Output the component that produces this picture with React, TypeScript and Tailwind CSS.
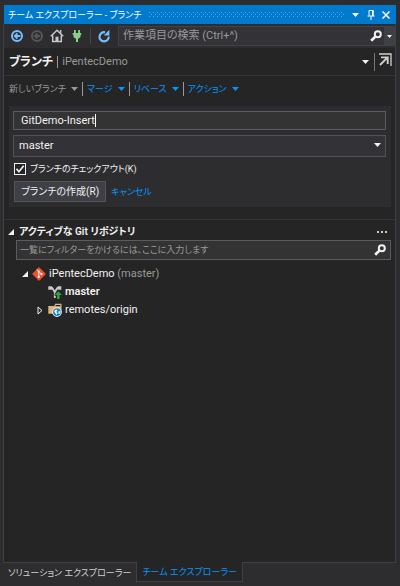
import { useState } from "react";

const CaretDown = ({ className = "" }: { className?: string }) => (
  <svg viewBox="0 0 7 4" className={`h-1 w-[7px] shrink-0 fill-current ${className}`}>
    <path d="M0 0h7L3.5 4z" />
  </svg>
);

const SearchIcon = () => (
  <svg viewBox="0 0 12 12" className="size-3 shrink-0 text-[#f1f1f1]">
    <circle cx="7.8" cy="4.2" r="3" fill="none" stroke="currentColor" strokeWidth="2" />
    <path d="M5.6 6.4L1.2 10.8" stroke="currentColor" strokeWidth="2.7" />
  </svg>
);

const ArrowCircle = ({ className = "" }: { className?: string }) => (
  <svg viewBox="0 0 12 12" className={`size-3 ${className}`}>
    <circle cx="6" cy="6" r="5" fill="none" stroke="currentColor" strokeWidth="2" />
    <path d="M9.2 6H4M6.4 3.4L3.8 6l2.6 2.6" fill="none" stroke="currentColor" strokeWidth="1.8" />
  </svg>
);

const HomeIcon = () => (
  <svg viewBox="0 0 14 14" className="size-3.5 text-[#c8c8c8]">
    <path d="M.8 7.3L7 1.3l6.2 6M2.7 6.5v6h8.6v-6M10.6 1v3.5" fill="none" stroke="currentColor" strokeWidth="1.5" />
    <path d="M5.5 7.7h3v5h-3z" fill="currentColor" />
  </svg>
);

const PlugIcon = () => (
  <svg viewBox="0 0 10 14" className="h-3.5 w-2.5 fill-[#89d185]">
    <path d="M2 1h1.8v3h2.4V1H8v3h1.3v1.8h-.8V8L6.8 9.6H6V13H4V9.6h-.8L1.5 8V5.8H.7V4H2z" />
  </svg>
);

const RefreshIcon = () => (
  <svg viewBox="0 0 14 14" className="size-3.5 text-[#75bfff]">
    <path d="M8 3.3A4.6 4.6 0 1 0 11.7 7.6" fill="none" stroke="currentColor" strokeWidth="2.2" />
    <path d="M6.8 6.4h5.6V.8z" fill="currentColor" />
  </svg>
);

const PinIcon = () => (
  <svg viewBox="0 0 8 12" className="h-3 w-2 text-white">
    <path d="M2 6.5V1.5h4v5M.5 7h7M4 7v4" fill="none" stroke="currentColor" />
    <path d="M5 1h1.5v6H5z" fill="currentColor" />
  </svg>
);

const PopOutIcon = () => (
  <svg viewBox="0 0 13 13" className="size-[13px] text-[#d0d0d0]">
    <path d="M0 1h12v12" fill="none" stroke="currentColor" strokeWidth="1.3" />
    <path d="M2 4.4h6.7v6.6M8.3 4.7L1 12" fill="none" stroke="currentColor" strokeWidth="1.9" />
  </svg>
);

const GitIcon = () => (
  <svg viewBox="0 0 14 14" className="size-3.5">
    <path d="M7 .6L13.4 7 7 13.4.6 7z" fill="#f05133" stroke="#f05133" strokeLinejoin="round" />
    <path d="M4.8 2.4L6.8 4.6v5.2M6.8 4.6L9.4 7" fill="none" stroke="#fff" strokeWidth=".9" />
    <circle cx="6.8" cy="4.5" r="1" fill="#fff" />
    <circle cx="6.8" cy="9.9" r="1.1" fill="#fff" />
    <circle cx="9.5" cy="7.1" r="1.1" fill="#fff" />
  </svg>
);

const BranchIcon = () => (
  <svg viewBox="0 0 14 14" className="size-3.5">
    <path d="M2.4 3h1.8l2.6 4v6M11.2 3H9.4L6.8 7" fill="none" stroke="#c8c8c8" strokeWidth="1.9" />
    <path d="M.3 1.2h3.6v3.6H.3zM9.7 1.2h3.6v3.6H9.7z" fill="#c8c8c8" />
    <path d="M10.3 5.2L14 9v1.8h-2V14H8.5v-3.2h-2V9z" fill="#252526" />
    <path d="M10.3 6.2L14 10h-2.4v4H9v-4H6.6z" fill="#2fa043" />
  </svg>
);

const RemoteIcon = () => (
  <svg viewBox="0 0 14 14" className="size-3.5">
    <path d="M.3 3h5.9l1-2.2h6.3v10H.3z" fill="#dcb67a" />
    <path d="M7.9 2.1h4.4v1.2H7.3z" fill="#252526" />
    <circle cx="9" cy="9.1" r="4.8" fill="#e8f4fb" />
    <circle cx="9" cy="9.1" r="3.9" fill="#1b7fc0" />
    <path d="M6 8.2l2-2 1.6 1.4-1.2 1.2 1.2 1.4-1.2 1.8zM10.4 8.6l2-.6-.2 2.4-1.6.6z" fill="#e8f4fb" />
  </svg>
);

const Expanded = () => (
  <svg viewBox="0 0 6 6" className="size-1.5 shrink-0 fill-[#f1f1f1]">
    <path d="M6 0v6H0z" />
  </svg>
);

const menus = ["マージ", "リベース", "アクション"];

export default function App() {
  const [name, setName] = useState("GitDemo-Insert");
  const [filter, setFilter] = useState("");

  return (
    <div className="flex min-h-screen flex-col bg-[#2d2d30] pt-[5px] pr-1 pb-1 pl-[3px] font-[Roboto,'Noto_Sans_CJK_JP',sans-serif] text-[11px] leading-4 text-[#f1f1f1] [font-feature-settings:'palt']">
      <header className="ml-px flex h-[19px] items-center bg-[#007acc] pr-[6px] pl-1 text-white">
        <h1 className="text-[9px] whitespace-nowrap">チーム エクスプローラー - ブランチ</h1>
        <svg className="mr-[7px] ml-2 h-[5px] min-w-0 flex-1">
          <defs>
            <pattern id="grip" width="4" height="4" patternUnits="userSpaceOnUse">
              <path d="M0 0h1v1H0zM2 2h1v1H2z" fill="#59a8de" />
            </pattern>
          </defs>
          <rect width="100%" height="5" fill="url(#grip)" />
        </svg>
        <button aria-label="ウィンドウの位置">
          <CaretDown />
        </button>
        <button aria-label="自動的に隠す" className="ml-2">
          <PinIcon />
        </button>
        <button aria-label="閉じる" className="ml-[7px]">
          <svg viewBox="0 0 8 8" className="size-2">
            <path d="M.5.5l7 7M7.5.5l-7 7" stroke="currentColor" strokeWidth="1.5" />
          </svg>
        </button>
      </header>

      <main className="flex flex-1 flex-col border-x border-[#3f3f46] bg-[#252526]">
        <div className="flex h-6 items-center bg-[#2d2d30] pl-[7px]">
          <button aria-label="戻る">
            <ArrowCircle className="text-[#75bfff]" />
          </button>
          <button aria-label="進む" disabled className="ml-2">
            <ArrowCircle className="text-[#555558]" />
          </button>
          <button aria-label="ホーム" className="ml-[7px]">
            <HomeIcon />
          </button>
          <button aria-label="接続の管理" className="ml-2">
            <PlugIcon />
          </button>
          <span className="ml-2 h-4 w-px bg-[#46464a]" />
          <button aria-label="更新" className="ml-[6px]">
            <RefreshIcon />
          </button>
          <div className="ml-[7px] flex h-5 min-w-0 flex-1 items-center border border-[#434346] bg-[#333337] pl-1">
            <input
              aria-label="作業項目の検索"
              placeholder="作業項目の検索 (Ctrl+^)"
              className="min-w-0 flex-1 outline-none placeholder:text-[#999999]"
            />
            <button aria-label="検索" className="mr-0.5">
              <SearchIcon />
            </button>
            <button aria-label="検索オプション" className="flex h-full w-[10px] items-center justify-center bg-[#3f3f46]">
              <svg viewBox="0 0 5 3" className="h-[3px] w-[5px] fill-current">
                <path d="M0 0h5L2.5 3z" />
              </svg>
            </button>
          </div>
        </div>

        <div className="flex h-7 items-center border-b border-[#333337] pr-[3px] pl-[5px]">
          <h2 className="text-xs font-bold">ブランチ</h2>
          <span className="mx-1 h-3 w-px bg-[#999999]" />
          <span className="text-[#999999]">iPentecDemo</span>
          <button aria-label="ページの選択" className="ml-auto">
            <CaretDown />
          </button>
          <span className="mr-1 ml-[5px] h-[18px] w-px bg-[#77777a]" />
          <button aria-label="ウィンドウで開く" className="pb-1">
            <PopOutIcon />
          </button>
        </div>

        <nav className="flex h-[26px] items-center pl-[5px] text-[9px] text-[#0097fb]">
          <button disabled className="flex items-center gap-[5px] text-[#999999]">
            新しいブランチ
            <CaretDown />
          </button>
          {menus.map((menu) => (
            <div key={menu} className="flex items-center">
              <span className="mx-1 h-3.5 w-px bg-[#999999]" />
              <button className="flex items-center gap-[5px]">
                {menu}
                <CaretDown />
              </button>
            </div>
          ))}
        </nav>

        <form
          className="mt-1 mr-1 ml-[5px] flex flex-col bg-[#2d2d30] py-[5px] pr-[5px] pl-1"
          onSubmit={(e) => e.preventDefault()}
        >
          <label className="flex h-[19px] items-center border border-[#5a5a60] bg-[#333333] pl-[7px]">
            <input
              aria-label="ブランチ名"
              value={name}
              onChange={(e) => setName(e.target.value)}
              className="field-sizing-content outline-none"
            />
            <span className="h-[13px] w-px bg-white" />
          </label>
          <div className="relative mt-[5px]">
            <select
              aria-label="元のブランチ"
              className="block h-[22px] w-full appearance-none border border-[#515158] bg-[#333337] px-[5px] outline-none"
            >
              <option>master</option>
            </select>
            <CaretDown className="pointer-events-none absolute top-2 right-[5px]" />
          </div>
          <label className="mt-1 flex h-4 items-center gap-1 pl-px text-[9px]">
            <span className="relative flex">
              <input
                type="checkbox"
                defaultChecked
                className="peer size-3 appearance-none border border-[#f1f1f1] bg-[#252526]"
              />
              <svg viewBox="0 0 12 12" className="pointer-events-none absolute inset-0 hidden size-3 peer-checked:block">
                <path d="M2.5 5.8l2.4 2.9 4.8-6" fill="none" stroke="currentColor" strokeWidth="1.7" />
              </svg>
            </span>
            ブランチのチェックアウト(K)
          </label>
          <div className="mt-1 flex items-center gap-[5px] pl-px">
            <button className="h-[21px] border border-[#555555] bg-[#3f3f46] px-[6px] text-[10px]">
              ブランチの作成(R)
            </button>
            <button type="button" className="text-[9px] text-[#0097fb]">
              キャンセル
            </button>
          </div>
        </form>

        <section className="mt-3 border-t border-[#333337] pt-[3px]">
          <div className="flex h-[17px] items-center pr-2 pl-1">
            <Expanded />
            <h3 className="ml-[5px] text-[10px] font-semibold">アクティブな Git リポジトリ</h3>
            <button aria-label="その他" className="ml-auto flex gap-0.5">
              <span className="size-0.5 bg-[#c8c8c8]" />
              <span className="size-0.5 bg-[#c8c8c8]" />
              <span className="size-0.5 bg-[#c8c8c8]" />
            </button>
          </div>
          <div className="mr-1 ml-3 flex h-5 items-center border border-[#5a5a60] bg-[#333333] pr-1 pl-[3px]">
            <input
              aria-label="一覧のフィルター"
              value={filter}
              onChange={(e) => setFilter(e.target.value)}
              placeholder="一覧にフィルターをかけるには、ここに入力します"
              className="min-w-0 flex-1 text-[9px] outline-none placeholder:text-[#999999]"
            />
            <button aria-label="フィルター">
              <SearchIcon />
            </button>
          </div>
          <ul className="mt-[5px] leading-[18px]">
            <li>
              <div className="flex items-center pl-[18px]">
                <Expanded />
                <span className="mr-[3px] ml-1">
                  <GitIcon />
                </span>
                iPentecDemo&nbsp;<span className="text-[#999999]">(master)</span>
              </div>
              <ul>
                <li className="flex items-center gap-[3px] pl-11 font-semibold">
                  <BranchIcon />
                  master
                </li>
                <li className="flex items-center gap-[3px] pl-[33px]">
                  <svg viewBox="0 0 6 9" className="mr-0.5 h-[9px] w-1.5">
                    <path d="M1 1v7l4-3.5z" fill="none" stroke="#f1f1f1" />
                  </svg>
                  <RemoteIcon />
                  remotes/origin
                </li>
              </ul>
            </li>
          </ul>
        </section>
      </main>

      <footer className="flex h-5 items-stretch text-[9px]">
        <button className="border-t border-[#3f3f46] px-[5px] text-[#d0d0d0]">ソリューション エクスプローラー</button>
        <button className="border-x border-b border-[#3f3f46] bg-[#252526] px-[5px] text-[#0097fb]">
          チーム エクスプローラー
        </button>
        <span className="flex-1 border-t border-[#3f3f46]" />
      </footer>
    </div>
  );
}
